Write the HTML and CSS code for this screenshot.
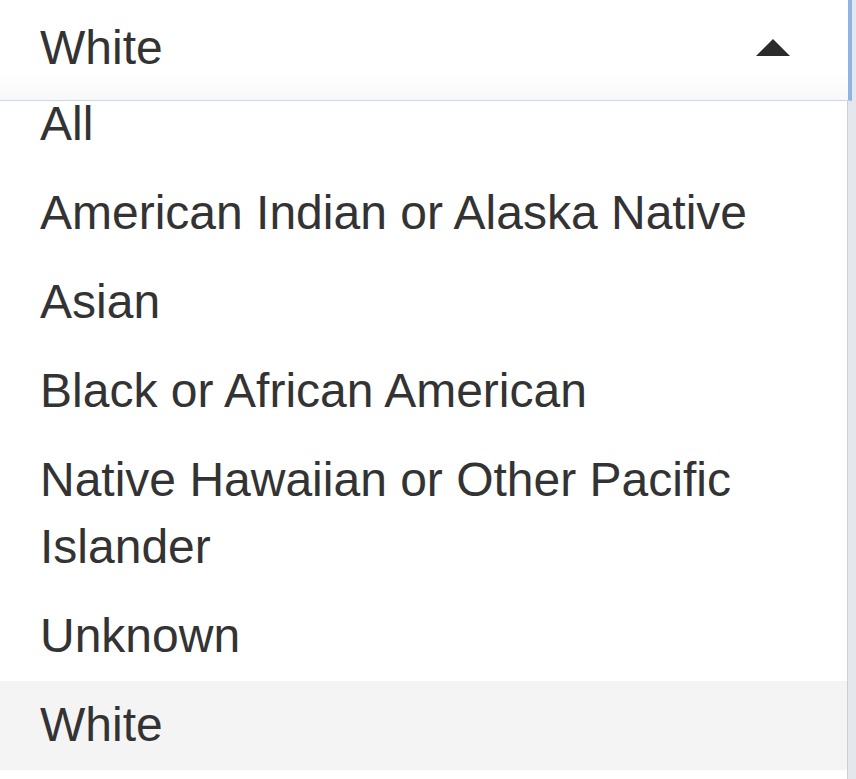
FILE: index.html
```html
<!DOCTYPE html>
<html lang="en">
<head>
    <meta charset="UTF-8">
    <meta name="viewport" content="width=device-width, initial-scale=1.0">
    <title>Race</title>
    <link rel="stylesheet" href="styles.css">
</head>
<body>

    <div class="select">
        <div class="select-head">
            <span class="select-value">White</span>
            <span class="caret"></span>
        </div>
        <div class="select-menu">
            <ul class="options">
                <li>All</li>
                <li>American Indian or Alaska Native</li>
                <li>Asian</li>
                <li>Black or African American</li>
                <li>Native Hawaiian or Other Pacific Islander</li>
                <li>Unknown</li>
                <li class="selected">White</li>
            </ul>
        </div>
    </div>

</body>
</html>
```

FILE: styles.css
```css
body {
    margin: 0;
    background-color: #e4e7eb;
    font-family: "Liberation Sans", Arial, sans-serif;
    color: #333;
    height: 779px;
    overflow: hidden;
}
.select {
    width: 852px;
}
.select-head {
    box-sizing: border-box;
    height: 101px;
    display: flex;
    align-items: center;
    justify-content: space-between;
    padding: 0 58px 6px 40px;
    background: linear-gradient(#fff 70%, #f8f8f8);
    border-right: 4px solid #8db4e4;
    border-bottom: 1px solid #c8d8ea;
    font-size: 48px;
}
.caret {
    width: 0;
    height: 0;
    border-left: 17px solid transparent;
    border-right: 17px solid transparent;
    border-bottom: 17px solid #2b2b2b;
}
.select-menu {
    width: 847px;
    height: 678px;
    overflow: hidden;
    background-color: #fff;
    border-right: 1px solid #cfcfcf;
}
.options {
    list-style: none;
    margin: -21px 0 0 0;
    padding: 0;
}
.options li {
    padding: 10px 100px 12px 40px;
    font-size: 48px;
    line-height: 67px;
}
.options li.selected {
    background-color: #f4f4f4;
}
```
